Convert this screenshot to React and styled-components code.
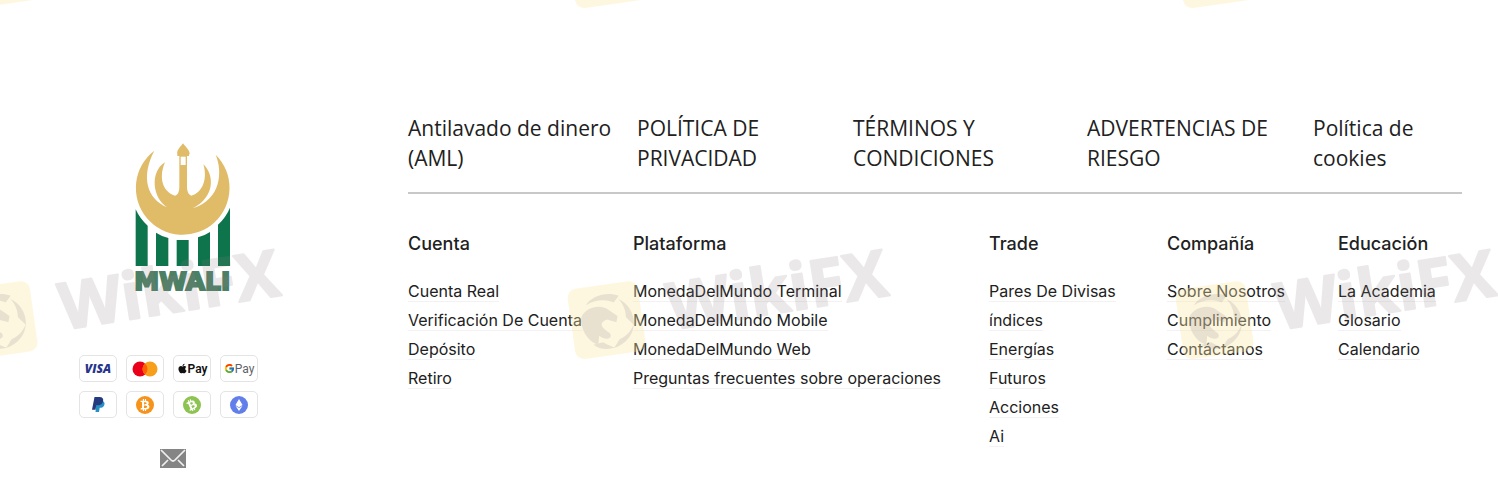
import styled, { createGlobalStyle } from "styled-components";
import { FaApple, FaBtc, FaEthereum } from "react-icons/fa";
import { FcGoogle } from "react-icons/fc";

const policies = [
  "Antilavado de dinero (AML)",
  "POLÍTICA DE PRIVACIDAD",
  "TÉRMINOS Y CONDICIONES",
  "ADVERTENCIAS DE RIESGO",
  "Política de cookies",
];

const columns = [
  {
    title: "Cuenta",
    links: ["Cuenta Real", "Verificación De Cuenta", "Depósito", "Retiro"],
  },
  {
    title: "Plataforma",
    links: [
      "MonedaDelMundo Terminal",
      "MonedaDelMundo Mobile",
      "MonedaDelMundo Web",
      "Preguntas frecuentes sobre operaciones",
    ],
  },
  {
    title: "Trade",
    links: ["Pares De Divisas", "índices", "Energías", "Futuros", "Acciones", "Ai"],
  },
  {
    title: "Compañía",
    links: ["Sobre Nosotros", "Cumplimiento", "Contáctanos"],
  },
  {
    title: "Educación",
    links: ["La Academia", "Glosario", "Calendario"],
  },
];

const marks = [
  { x: -44, y: -71 },
  { x: 564, y: -71 },
  { x: 1172, y: -71 },
  { x: -44, y: 280, word: true },
  { x: 564, y: 280, word: true },
  { x: 1172, y: 280, word: true },
];

export default function App() {
  return (
    <>
      <GlobalStyle />
      <Footer>
        <Brand>
          <LogoLink href="#" aria-label="Mwali">
            <Logo />
          </LogoLink>
          <Payments>
            <Card>
              <VisaText>VISA</VisaText>
            </Card>
            <Card>
              <Mastercard />
            </Card>
            <Card>
              <FaApple size={11} color="#111" />
              <PayText $dark>Pay</PayText>
            </Card>
            <Card>
              <FcGoogle size={11} />
              <PayText>Pay</PayText>
            </Card>
            <Card>
              <Paypal />
            </Card>
            <Card>
              <Coin $color="#f7931a">
                <FaBtc size={12} />
              </Coin>
            </Card>
            <Card>
              <Coin $color="#8dc351" $tilt>
                <FaBtc size={12} />
              </Coin>
            </Card>
            <Card>
              <Coin $color="#627eea">
                <FaEthereum size={12} />
              </Coin>
            </Card>
          </Payments>
          <MailLink href="#" aria-label="Email">
            <Envelope />
          </MailLink>
        </Brand>
        <Content>
          <Policies>
            {policies.map((name) => (
              <PolicyLink href="#" key={name}>
                {name}
              </PolicyLink>
            ))}
          </Policies>
          <Columns>
            {columns.map(({ title, links }) => (
              <section key={title}>
                <Title>{title}</Title>
                <List>
                  {links.map((link) => (
                    <li key={link}>
                      <FooterLink href="#">{link}</FooterLink>
                    </li>
                  ))}
                </List>
              </section>
            ))}
          </Columns>
        </Content>
        <Watermarks aria-hidden="true">
          {marks.map((mark) => (
            <Mark key={`${mark.x} ${mark.y}`} {...mark} />
          ))}
        </Watermarks>
      </Footer>
    </>
  );
}

function Logo() {
  return (
    <svg width="96" height="150" viewBox="75 36 288 450" overflow="visible">
      <path
        fill="#e0bb68"
        d="M133 62A140.500 140.500 0 1 0 317 74C338 124 334 208 248 235C318 200 312 132 280 103C294 148 276 190 244 197Q231 192 231 172V78H237V73H239C240 60 227 52 219 40C211 52 199 60 202 73V78H208V172Q208 192 196 197C160 188 144 145 165 97C118 126 128 206 172 232C110 206 92 140 133 62Z"
      />
      <path fill="#fff" d="M212 80H227V105H212Z" />
      <path
        fill="#0d744c"
        d="M77 238Q90 267 113 287V408H77ZM138 308Q155 319 175 324V408H138ZM200 330H236V408H200ZM264 322Q284 317 300 306V408H264ZM324 284Q348 262 360 233V408H324Z"
      />
      <text
        x="73"
        y="481"
        fill="#4c8065"
        stroke="#4c8065"
        strokeWidth="6"
        fontFamily="DejaVu Sans, sans-serif"
        fontSize="75"
        fontWeight="700"
      >
        MWALI
      </text>
    </svg>
  );
}

function Mastercard() {
  return (
    <svg width="26" height="16" viewBox="0 0 26 16">
      <circle cx="8" cy="8" r="7.5" fill="#eb001b" />
      <circle cx="18" cy="8" r="7.5" fill="#f79e1b" />
      <path d="M13 2.4a7.5 7.5 0 0 1 0 11.2a7.5 7.5 0 0 1 0-11.2z" fill="#ff5f00" />
    </svg>
  );
}

function Paypal() {
  return (
    <svg width="13" height="15" viewBox="0 0 13 15">
      <path d="M4.5 4h6.2c1.8.8 2.2 2.4 1.6 4c-.6 2-2.2 2.8-4.6 2.8L7 15H3.5z" fill="#2790c3" />
      <path d="M2.5 0h5c3 0 4.2 1.7 3.6 4.2C10.500 7 8.700 8.200 6 8.200H4.300L3.500 12.800H0z" fill="#253b80" />
    </svg>
  );
}

function Envelope() {
  return (
    <svg width="26" height="20" viewBox="0 0 26 20">
      <path d="M0 0h26v19H0z" fill="#858585" />
      <path
        d="M1 1L11 11q2 2 4 0L25 1M2 17l6-6M24 17l-6-6"
        fill="none"
        stroke="#f0f0f0"
        strokeWidth="1.700"
      />
    </svg>
  );
}

function Mark({ x, y, word }) {
  return (
    <g transform={`translate(${x} ${y})`}>
      <g transform="rotate(-8 40 40)">
        <rect x="7" y="5" width="71" height="71" rx="9" fill="#fbe9a9" opacity="0.36" />
        <g fill="#9b8f91" opacity="0.2">
          <path d="M24 23C31 14 47 12 58 18L52 24C43 19 34 19 24 23Z" />
          <path d="M57 21C66 27 71 37 69 49L62 40C63 33 61 27 57 21Z" />
          <path d="M69 48C67 59 58 67 46 69L53 61C60 59 65 55 69 48Z" />
          <path d="M47 69C38 70 31 68 26 63L36 62C40 65 43 67 47 69Z" />
          <path d="M18 34C24 25 36 24 44 29L54 38L52 44L43 40C34 42 36 47 44 54C47 60 38 61 33 55L31 64C21 59 15 47 18 34Z" />
        </g>
      </g>
      {word && (
        <text
          x="107"
          y="50"
          transform="rotate(-9 107 50)"
          fill="#8d7d80"
          stroke="#8d7d80"
          strokeWidth="2"
          strokeLinejoin="round"
          opacity="0.17"
          fontFamily="Open Sans, sans-serif"
          fontSize="65"
          fontWeight="700"
        >
          WikiFX
        </text>
      )}
    </g>
  );
}

const GlobalStyle = createGlobalStyle`
  * {
    box-sizing: border-box;
  }
  body {
    margin: 0;
    background: #ffffff;
    color: #212121;
    font-family: Inter, sans-serif;
  }
  a {
    color: inherit;
    text-decoration: none;
  }
`;

const Footer = styled.footer`
  position: relative;
  display: flex;
  padding: 113px 36px 28px 79px;
  overflow: hidden;
`;

const Brand = styled.div`
  flex: 0 0 329px;
  display: flex;
  flex-direction: column;
  align-items: flex-start;
  padding-top: 29px;
`;

const LogoLink = styled.a`
  display: flex;
  margin-left: 56px;
`;

const Payments = styled.div`
  display: grid;
  grid-template-columns: repeat(4, 38px);
  gap: 9px;
  margin-top: 63px;
`;

const Card = styled.div`
  display: flex;
  align-items: center;
  justify-content: center;
  height: 27px;
  border: 1px solid #e4e4e4;
  border-radius: 5px;
`;

const VisaText = styled.span`
  font: italic 800 12px "Open Sans", sans-serif;
  color: #27348b;
`;

const PayText = styled.span`
  font: ${({ $dark }) => ($dark ? 600 : 400)} 12px Roboto, sans-serif;
  color: ${({ $dark }) => ($dark ? "#111111" : "#5f6368")};
`;

const Coin = styled.span`
  display: flex;
  align-items: center;
  justify-content: center;
  width: 18px;
  height: 18px;
  border-radius: 50%;
  background: ${({ $color }) => $color};
  color: #ffffff;
  svg {
    transform: rotate(${({ $tilt }) => ($tilt ? "-24deg" : "0deg")});
  }
`;

const MailLink = styled.a`
  display: flex;
  margin: 31px 0 0 81px;
`;

const Content = styled.div`
  flex: 1;
  min-width: 0;
`;

const Policies = styled.nav`
  display: grid;
  grid-template-columns: 229fr 216fr 234fr 226fr 149fr;
  padding-bottom: 19px;
  border-bottom: 2px solid #c8c8c8;
`;

const PolicyLink = styled.a`
  padding-right: 22px;
  font-family: "Open Sans", sans-serif;
  font-size: 21px;
  line-height: 30px;
`;

const Columns = styled.div`
  display: grid;
  grid-template-columns: 225fr 356fr 178fr 171fr 124fr;
  padding-top: 38px;
`;

const Title = styled.h2`
  margin: 0 0 21px;
  font-size: 18px;
  font-weight: 500;
  line-height: 24px;
`;

const List = styled.ul`
  margin: 0;
  padding: 0;
  list-style: none;
  line-height: 29px;
`;

const FooterLink = styled.a`
  border-bottom: 1px solid #f3f1f1;
  font-size: 16px;
  white-space: nowrap;
`;

const Watermarks = styled.svg`
  position: absolute;
  inset: 0;
  width: 100%;
  height: 100%;
  pointer-events: none;
`;
